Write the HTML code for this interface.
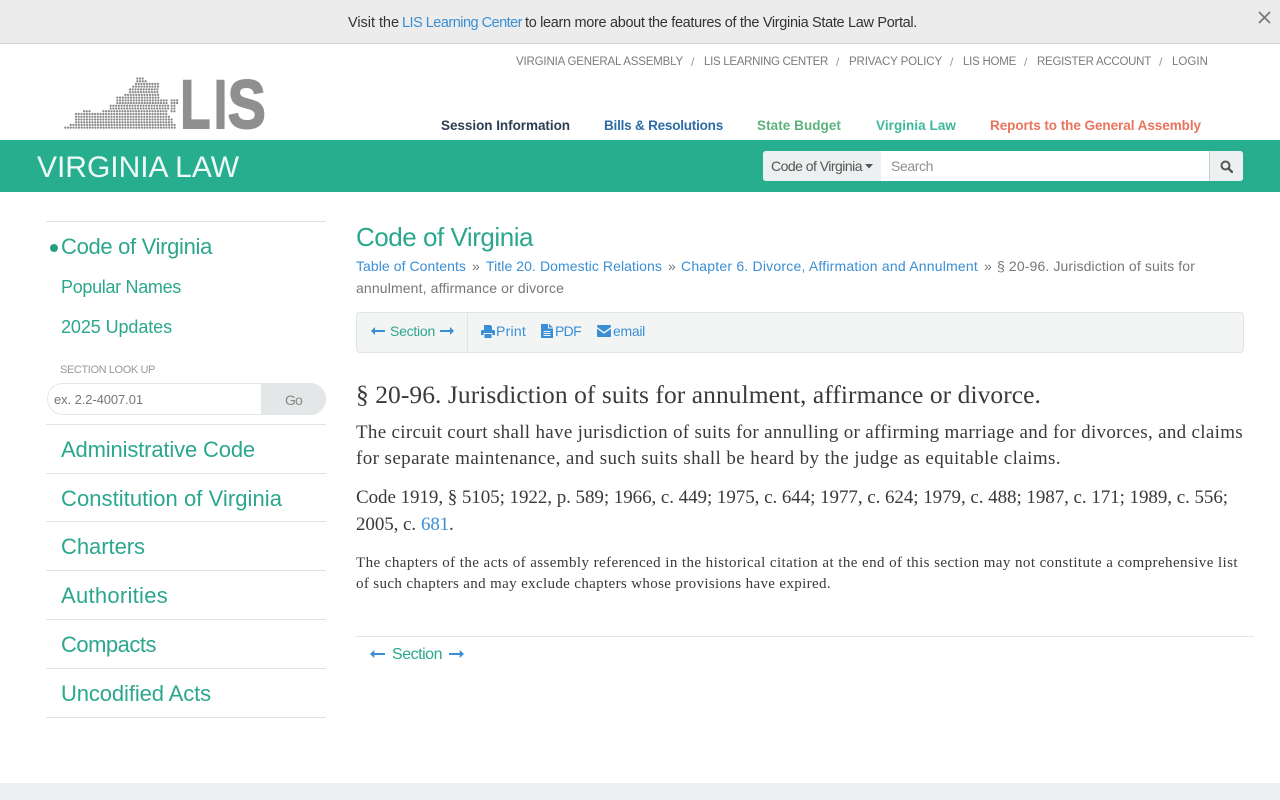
<!DOCTYPE html>
<html lang="en">
<head>
<meta charset="utf-8">
<title>§ 20-96. Jurisdiction of suits for annulment, affirmance or divorce</title>
<style>
html,body{margin:0;padding:0;background:#fff}
body{position:relative;width:1280px;height:800px;overflow:hidden;font-family:"Liberation Sans",sans-serif;color:#333}
a{text-decoration:none;color:inherit}
.t{position:absolute;white-space:nowrap;line-height:1;top:calc(var(--b)*1px - .8465em);display:block}
.s{font-family:"Liberation Serif",serif;top:calc(var(--b)*1px - .8375em);color:#3a3a3a}
.b{position:absolute}
.hr{position:absolute;left:46px;width:280px;height:1px;background:#dfe3e3}
.top{font-size:11.5px;color:#7b7b7b;--b:67}
.sl{font-size:12px;color:#999;--b:66}
.nav{font-size:13.5px;font-weight:bold;--b:130}
.g{color:#2ba78d}
.side{font-size:22px;color:#2ba78d}
.side2{font-size:18px;color:#2ba78d}
.bc{font-size:14px;color:#3a8ed3}
.bs{font-size:14px;color:#777}
.tb{font-size:14px;color:#3a8ed3;--b:336}
svg{position:absolute;display:block}
</style>
</head>
<body>

<div class="b" style="left:0;top:0;width:1280px;height:43px;background:#ececec;border-bottom:1px solid #d2d2d2"></div>
<span class="t" style="left:348px;--b:28;font-size:14.5px;color:#333" data-w="51">Visit the</span>
<a class="t" href="#" style="left:402px;--b:28;font-size:14.5px;color:#3a8ed3" data-w="120">LIS Learning Center</a>
<span class="t" style="left:525px;--b:28;font-size:14.5px;color:#333" data-w="392">to learn more about the features of the Virginia State Law Portal.</span>
<svg style="left:1258px;top:11px" width="13" height="13" viewBox="0 0 13 13"><path d="M1 1L12 12M12 1L1 12" stroke="#777" stroke-width="1.7" fill="none"/></svg>

<svg style="left:40px;top:60px" width="240" height="80" viewBox="0 0 720 240">
<path fill="none" stroke="#8a8a8a" stroke-width="6.8" stroke-linecap="round" stroke-dasharray="0 8.2" d="M76 203H404M92 194.800H404M108 186.600H396M108 178.400H396M108 170.200H390M108 162H386M132 153.800H150M190 153.800H386M212 145.600H386M212 137.400H386M232 129.200H386M232 121H381M232 112.800H356M256 104.600H356M270 96.400H356M270 88.200H356M280 80H356M288 71.800H356M292 63.600H322M292 55.400H310M395 121H413M395 129.200H413M395 137.400H405M395 145.600H405M395 153.800H405"/>
</svg>
<svg style="left:170px;top:70px" width="100" height="65" viewBox="170 70 100 65">
<g font-family="Liberation Sans,sans-serif" font-weight="bold" font-size="69" fill="#8f8f8f" stroke="#8f8f8f" stroke-width="2">
<text x="180.400" y="128" textLength="30" lengthAdjust="spacingAndGlyphs">L</text>
<text x="214" y="128" textLength="13" lengthAdjust="spacingAndGlyphs">I</text>
<text x="227.700" y="128" textLength="38" lengthAdjust="spacingAndGlyphs">S</text>
</g>
</svg>

<a class="t top" href="#" style="left:516px" data-w="167">VIRGINIA GENERAL ASSEMBLY</a><span class="t sl" style="left:691px">/</span>
<a class="t top" href="#" style="left:704px" data-w="124">LIS LEARNING CENTER</a><span class="t sl" style="left:836px">/</span>
<a class="t top" href="#" style="left:849px" data-w="93">PRIVACY POLICY</a><span class="t sl" style="left:950px">/</span>
<a class="t top" href="#" style="left:963px" data-w="53">LIS HOME</a><span class="t sl" style="left:1024px">/</span>
<a class="t top" href="#" style="left:1037px" data-w="114">REGISTER ACCOUNT</a><span class="t sl" style="left:1159px">/</span>
<a class="t top" href="#" style="left:1172px" data-w="36">LOGIN</a>

<a class="t nav" href="#" style="left:441px;color:#2c3e50" data-w="129">Session Information</a>
<a class="t nav" href="#" style="left:604px;color:#2d6ca6" data-w="119">Bills &amp; Resolutions</a>
<a class="t nav" href="#" style="left:757px;color:#5cb27c" data-w="84">State Budget</a>
<a class="t nav" href="#" style="left:876px;color:#3eb79d" data-w="80">Virginia Law</a>
<a class="t nav" href="#" style="left:990px;color:#e9745b" data-w="211">Reports to the General Assembly</a>

<div class="b" style="left:0;top:140px;width:1280px;height:52px;background:#27ae8f"></div>
<span class="t" style="left:37px;--b:178;font-size:30px;color:rgba(255,255,255,.92)" data-w="202">VIRGINIA LAW</span>
<div class="b" style="left:763px;top:151px;width:480px;height:30px;background:#fff;border-radius:3px;overflow:hidden">
  <div class="b" style="left:0;top:0;width:118px;height:30px;background:#ecf0f1"></div>
  <div class="b" style="left:446px;top:0;width:34px;height:30px;background:#ecf0f1;border-left:1px solid #c9cdcd;box-sizing:border-box"></div>
</div>
<span class="t" style="left:771px;--b:171;font-size:14px;color:#555" data-w="91">Code of Virginia</span>
<svg style="left:865px;top:164px" width="8" height="5" viewBox="0 0 8 5"><path d="M0 0H8L4 4.500Z" fill="#555"/></svg>
<span class="t" style="left:891px;--b:171;font-size:14px;color:#8f8f8f" data-w="42">Search</span>
<svg style="left:1220px;top:160px" width="13" height="13" viewBox="0 0 13 13"><circle cx="5.500" cy="5.500" r="4" fill="none" stroke="#555" stroke-width="2"/><path d="M8.500 8.500L12 12" stroke="#555" stroke-width="2.400" stroke-linecap="round"/></svg>

<div class="hr" style="top:221px"></div>
<div class="b" style="left:50px;top:244px;width:8px;height:8px;border-radius:50%;background:#259e86"></div>
<a class="t side" href="#" style="left:61px;--b:255" data-w="151">Code of Virginia</a>
<a class="t side2" href="#" style="left:61px;--b:293" data-w="120">Popular Names</a>
<a class="t side2" href="#" style="left:61px;--b:333" data-w="111">2025 Updates</a>
<span class="t" style="left:60px;--b:374;font-size:11px;color:#999" data-w="95">SECTION LOOK UP</span>
<div class="b" style="left:47px;top:383px;width:279px;height:32px;box-sizing:border-box;border:1px solid #e6e8e8;border-radius:16px;background:#fff;overflow:hidden"></div>
<div class="b" style="left:261px;top:383px;width:65px;height:32px;background:#e3e7e7;border-radius:0 16px 16px 0"></div>
<span class="t" style="left:54px;--b:404;font-size:13px;color:#777" data-w="89">ex. 2.2-4007.01</span>
<span class="t" style="left:285px;--b:405;font-size:14px;color:#888" data-w="17">Go</span>
<div class="hr" style="top:424px"></div>
<a class="t side" href="#" style="left:61px;--b:458" data-w="194">Administrative Code</a>
<div class="hr" style="top:473px"></div>
<a class="t side" href="#" style="left:61px;--b:507" data-w="221">Constitution of Virginia</a>
<div class="hr" style="top:521px"></div>
<a class="t side" href="#" style="left:61px;--b:555" data-w="84">Charters</a>
<div class="hr" style="top:570px"></div>
<a class="t side" href="#" style="left:61px;--b:604" data-w="107">Authorities</a>
<div class="hr" style="top:619px"></div>
<a class="t side" href="#" style="left:61px;--b:653" data-w="95">Compacts</a>
<div class="hr" style="top:668px"></div>
<a class="t side" href="#" style="left:61px;--b:702" data-w="150">Uncodified Acts</a>
<div class="hr" style="top:717px"></div>

<span class="t g" style="left:356px;--b:246;font-size:26px" data-w="177">Code of Virginia</span>
<a class="t bc" href="#" style="left:356px;--b:271" data-w="110">Table of Contents</a><span class="t bs" style="left:472px;--b:271">»</span>
<a class="t bc" href="#" style="left:486px;--b:271" data-w="176">Title 20. Domestic Relations</a><span class="t bs" style="left:668px;--b:271">»</span>
<a class="t bc" href="#" style="left:681px;--b:271" data-w="297">Chapter 6. Divorce, Affirmation and Annulment</a><span class="t bs" style="left:984px;--b:271">»</span>
<span class="t bs" style="left:997px;--b:271" data-w="198">§ 20-96. Jurisdiction of suits for</span>
<span class="t bs" style="left:356px;--b:293" data-w="208">annulment, affirmance or divorce</span>

<div class="b" style="left:356px;top:312px;width:888px;height:41px;box-sizing:border-box;background:#f3f5f5;border:1px solid #e0e4e4;border-radius:4px"></div>
<div class="b" style="left:467px;top:313px;width:1px;height:39px;background:#e0e4e4"></div>
<svg style="left:371px;top:327px" width="14" height="8" viewBox="0 0 14 8"><path d="M14 3H4V0L0 4L4 8V5H14Z" fill="#3a8ed3"/></svg>
<a class="t tb g" href="#" style="left:390px;color:#2ba78d" data-w="45">Section</a>
<svg style="left:440px;top:327px" width="14" height="8" viewBox="0 0 14 8"><path d="M0 3H10V0L14 4L10 8V5H0Z" fill="#3a8ed3"/></svg>
<svg style="left:481px;top:325px" width="14" height="13" viewBox="0 0 14 13"><path d="M3 0H9.500L11 1.500V5H3ZM1.500 5H12.500Q14 5 14 6.500V10H11.500V8H2.500V10H0V6.500Q0 5 1.500 5ZM3.500 9H10.500V13H3.500Z" fill="#3a8ed3"/></svg>
<a class="t tb" href="#" style="left:496px" data-w="30">Print</a>
<svg style="left:541px;top:324px" width="12" height="14" viewBox="0 0 12 14"><path d="M0 0H7V4.500H12V14H0ZM8 0L12 3.500H8ZM2.500 7V8H9.500V7ZM2.500 9V10H9.500V9ZM2.500 11V12H9.500V11Z" fill="#3a8ed3" fill-rule="evenodd"/></svg>
<a class="t tb" href="#" style="left:555px" data-w="26">PDF</a>
<svg style="left:597px;top:325px" width="14" height="12" viewBox="0 0 14 12"><path d="M1 0H13Q14 0 14 1V2L7 7L0 2V1Q0 0 1 0ZM0 3.800L7 8.800L14 3.800V11Q14 12 13 12H1Q0 12 0 11Z" fill="#3a8ed3"/></svg>
<a class="t tb" href="#" style="left:613px" data-w="32">email</a>

<h1 class="t s" style="margin:0;left:356px;--b:403;font-size:25.5px;font-weight:normal" data-w="685">§ 20-96. Jurisdiction of suits for annulment, affirmance or divorce.</h1>
<span class="t s" style="left:356px;--b:439;font-size:19px" data-w="887">The circuit court shall have jurisdiction of suits for annulling or affirming marriage and for divorces, and claims</span>
<span class="t s" style="left:356px;--b:465;font-size:19px" data-w="705">for separate maintenance, and such suits shall be heard by the judge as equitable claims.</span>
<span class="t s" style="left:356px;--b:504;font-size:19px" data-w="872">Code 1919, § 5105; 1922, p. 589; 1966, c. 449; 1975, c. 644; 1977, c. 624; 1979, c. 488; 1987, c. 171; 1989, c. 556;</span>
<span class="t s" style="left:356px;--b:531;font-size:19px" data-w="60">2005, c.</span>
<a class="t s" href="#" style="left:421px;--b:531;font-size:19px;color:#3a8ed3" data-w="28">681</a>
<span class="t s" style="left:449px;--b:531;font-size:19px">.</span>
<span class="t s" style="left:356px;--b:569;font-size:15px" data-w="882">The chapters of the acts of assembly referenced in the historical citation at the end of this section may not constitute a comprehensive list</span>
<span class="t s" style="left:356px;--b:590;font-size:15px" data-w="475">of such chapters and may exclude chapters whose provisions have expired.</span>

<div class="b" style="left:356px;top:636px;width:898px;height:1px;background:#e3e6e6"></div>
<svg style="left:370px;top:650px" width="15" height="8" viewBox="0 0 14 8" preserveAspectRatio="none"><path d="M14 3H4V0L0 4L4 8V5H14Z" fill="#3a8ed3"/></svg>
<a class="t" href="#" style="left:392px;--b:661;font-size:16px;color:#2ba78d" data-w="50">Section</a>
<svg style="left:449px;top:650px" width="15" height="8" viewBox="0 0 14 8" preserveAspectRatio="none"><path d="M0 3H10V0L14 4L10 8V5H0Z" fill="#3a8ed3"/></svg>

<div class="b" style="left:0;top:783px;width:1280px;height:17px;background:#ecf0f1"></div>

<script>
document.querySelectorAll('[data-w]').forEach(function(e){
  var w=+e.getAttribute('data-w'),c=e.getBoundingClientRect().width,n=e.textContent.length;
  e.style.letterSpacing=((w-c)/n)+'px';
});
</script>
</body>
</html>
